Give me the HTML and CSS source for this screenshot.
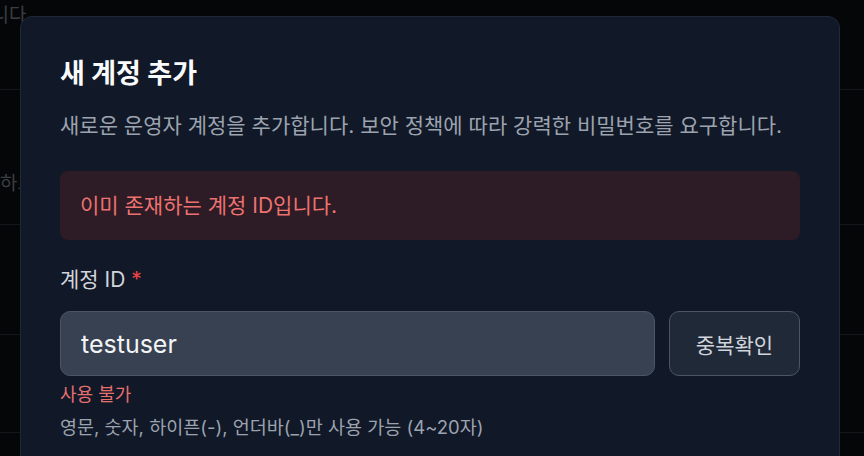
FILE: index.html
```html
<!DOCTYPE html>
<html lang="ko">
<head>
  <meta charset="UTF-8">
  <meta name="viewport" content="width=device-width, initial-scale=1.0">
  <title>새 계정 추가</title>
  <link rel="stylesheet" href="styles.css">
</head>
<body>

<div class="page">
  <div class="row row-first"><span class="cell">계정을 관리합니다.</span></div>
  <div class="row row-second"><span class="cell">검색하고</span></div>
  <div class="row row-third"></div>
  <div class="row row-fourth"></div>
</div>

<div class="modal">
  <h2 class="modal-title">새 계정 추가</h2>
  <p class="modal-desc">새로운 운영자 계정을 추가합니다. 보안 정책에 따라 강력한 비밀번호를 요구합니다.</p>

  <div class="alert">이미 존재하는 계정 ID입니다.</div>

  <label class="label" for="accountId">계정 ID <span class="required">*</span></label>
  <div class="field-row">
    <input type="text" id="accountId" class="input" value="testuser">
    <button class="btn-check">중복확인</button>
  </div>
  <p class="status-error">사용 불가</p>
  <p class="hint">영문, 숫자, 하이픈(-), 언더바(_)만 사용 가능 (4~20자)</p>
</div>

</body>
</html>
```

FILE: styles.css
```css
body {
  margin: 0;
  font-family: Inter, "Noto Sans CJK KR", sans-serif;
  background-color: #050608;
  overflow: hidden;
  height: 456px;
}

/* dimmed page behind the dialog */
.page {
  display: flex;
  flex-direction: column;
}

.row {
  display: flex;
  align-items: flex-start;
  border-bottom: 1px solid #15171b;
  color: #3b3e43;
  font-size: 19px;
  line-height: 28px;
}

.row-first {
  height: 89px;
}

.row-second {
  height: 134px;
}

.row-third {
  height: 109px;
}

.row-fourth {
  height: 97px;
}

.cell {
  display: flex;
  justify-content: flex-end;
  overflow: hidden;
  white-space: nowrap;
}

.row-first .cell {
  width: 32px;
  margin-top: 2px;
}

.row-second .cell {
  width: 35px;
  margin-top: 80px;
}

.modal {
  position: absolute;
  top: 16px;
  left: 20px;
  width: 820px;
  height: 460px;
  box-sizing: border-box;
  padding: 41px 39px 0;
  background-color: #111827;
  border: 1px solid #1f2937;
  border-radius: 12px;
}

.modal-title {
  margin: 0;
  font-size: 27px;
  line-height: 32px;
  font-weight: 700;
  color: #f9fafb;
}

.modal-desc {
  margin: 22px 0 0;
  font-size: 21px;
  line-height: 28px;
  color: #9ca3af;
}

.alert {
  margin-top: 31px;
  padding: 20px;
  background-color: #2d1b25;
  border-radius: 8px;
  color: #ec7270;
  font-size: 21px;
  line-height: 29px;
}

.label {
  display: block;
  margin-top: 26px;
  font-size: 21px;
  line-height: 28px;
  color: #d1d5db;
}

.required {
  color: #ef4444;
}

.field-row {
  display: flex;
  gap: 14px;
  margin-top: 17px;
}

.input {
  flex: 1;
  height: 65px;
  box-sizing: border-box;
  padding: 0 20px;
  background-color: #374151;
  border: 1px solid #4b5563;
  border-radius: 10px;
  color: #f3f4f6;
  font-family: inherit;
  font-size: 25px;
  outline: none;
}

.btn-check {
  width: 131px;
  height: 65px;
  background-color: #1f2937;
  border: 1px solid #4b5563;
  border-radius: 10px;
  color: #d1d5db;
  font-family: inherit;
  font-size: 21px;
  cursor: pointer;
}

.status-error {
  margin: 6px 0 0;
  font-size: 18px;
  line-height: 26px;
  color: #e5706e;
}

.hint {
  margin: 6px 0 0;
  font-size: 18.5px;
  line-height: 26px;
  color: #9ca3af;
}
```
